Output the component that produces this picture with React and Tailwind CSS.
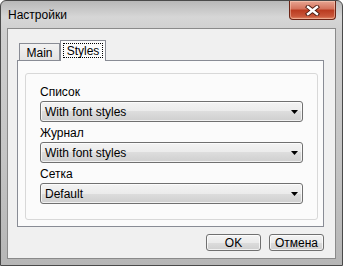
const font = { fontFamily: '"Liberation Sans", Arial, sans-serif' };

const Arrow = () => (
  <svg width="7" height="4" viewBox="0 0 7 4" className="shrink-0">
    <path d="M0 0H7L3.5 4Z" fill="#000" />
  </svg>
);

const Combo = ({ value }) => (
  <div className="flex h-[21px] items-center justify-between rounded-[3px] border border-[#707070] bg-[linear-gradient(#f3f3f3,#ebebeb_50%,#dddddd_50%,#cfcfcf)] pl-[4px] pr-[4px] text-[12px] leading-none text-black shadow-[inset_0_0_0_1px_rgba(255,255,255,0.7)]">
    <span>{value}</span>
    <Arrow />
  </div>
);

const Field = ({ label, value, first }) => (
  <div className={first ? "flex flex-col" : "mt-[3px] flex flex-col"}>
    <div className="h-[17px] text-[12px] leading-[17px] text-black">{label}</div>
    <Combo value={value} />
  </div>
);

const Button = ({ children }) => (
  <button className="flex h-[17px] w-[55px] items-center justify-center rounded-[3px] border border-[#707070] bg-[linear-gradient(#f3f3f3,#ebebeb_50%,#dddddd_50%,#cfcfcf)] text-[12px] leading-none text-black shadow-[inset_0_0_0_1px_rgba(255,255,255,0.7)]">
    {children}
  </button>
);

export default function App() {
  return (
    <div style={font} className="h-[266px] w-[343px] bg-white">
      <div className="flex h-[266px] w-[343px] flex-col rounded-t-[6px] border border-[#4a4a4a] bg-[linear-gradient(180deg,#b8b8b8_0%,#d6d6d6_6%,#cfcfcf_12%,#c4c4c4_60%,#b6b6b6_100%)]">
        {/* title bar */}
        <div className="flex h-[27px] items-start justify-between">
          <div className="pl-[7px] pt-[7px] text-[12px] leading-[14px] text-black">Настройки</div>
          <div className="mr-[6px] flex h-[19px] w-[47px] items-center justify-center rounded-b-[4px] border border-t-0 border-[#6b2415] bg-[linear-gradient(#e7a592,#d3715a_45%,#b93a1f_50%,#c9573a_85%,#e48a6a)] shadow-[inset_0_0_0_1px_rgba(255,220,200,0.45)]">
            <svg width="15" height="11" viewBox="0 0 15 11">
              <path d="M3 2L12 9M12 2L3 9" stroke="#4a1a10" strokeWidth="4.2" strokeLinecap="square" />
              <path d="M3 2L12 9M12 2L3 9" stroke="#fff" strokeWidth="2.4" strokeLinecap="square" />
            </svg>
          </div>
        </div>

        {/* client area */}
        <div className="mx-[6px] flex flex-col border border-[#8a8a8a] bg-[#f0f0f0] pb-[7px] pl-[9px] pr-[11px] pt-[11px]">
          {/* tabs */}
          <div className="relative z-10 flex h-[20px] items-end pl-[2px]">
            <div className="flex h-[17px] w-[41px] items-center justify-center border border-b-0 border-[#898c95] bg-[linear-gradient(#f2f2f2,#e3e3e3)] pt-[1px] text-[12px] leading-none text-black">
              Main
            </div>
            <div className="-mb-[1px] flex h-[21px] w-[46px] items-stretch border border-b-0 border-[#898c95] bg-[#fbfbfb] p-[2px] pb-[3px]">
              <div className="flex flex-1 items-center justify-center border border-dotted border-black text-[12px] leading-none text-black">
                Styles
              </div>
            </div>
          </div>

          {/* tab page */}
          <div className="h-[167px] border border-[#898c95] bg-[#fbfbfb] pb-[6px] pl-[7px] pr-[5px] pt-[12px]">
            <div className="flex h-[147px] flex-col rounded-[3px] border border-[#d8d8d8] bg-[#fbfbfb] px-[14px] pt-[10px]">
              <Field first label="Список" value="With font styles" />
              <Field label="Журнал" value="With font styles" />
              <Field label="Сетка" value="Default" />
            </div>
          </div>

          {/* buttons */}
          <div className="mt-[7px] flex justify-end gap-[8px]">
            <Button>OK</Button>
            <Button>Отмена</Button>
          </div>
        </div>
      </div>
    </div>
  );
}
